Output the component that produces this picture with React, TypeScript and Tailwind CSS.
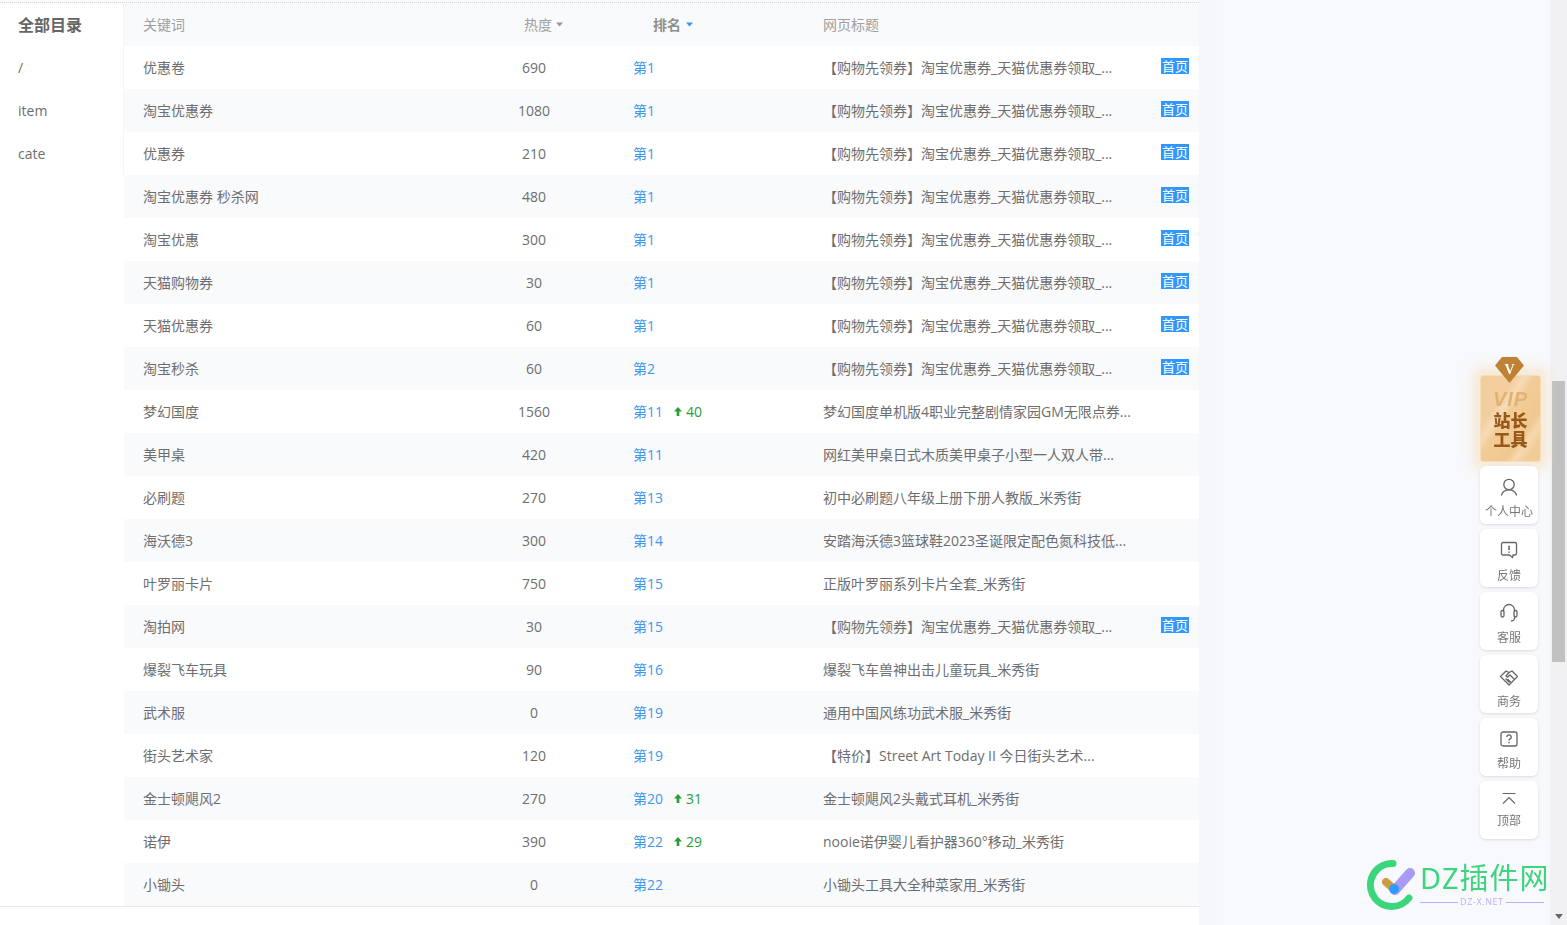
import React from "react";

const T = "【购物先领券】淘宝优惠券_天猫优惠券领取_...";
const rows: [string, string, string, string | null, string, boolean][] = [
  ["优惠卷", "690", "第1", null, T, true],
  ["淘宝优惠券", "1080", "第1", null, T, true],
  ["优惠券", "210", "第1", null, T, true],
  ["淘宝优惠券 秒杀网", "480", "第1", null, T, true],
  ["淘宝优惠", "300", "第1", null, T, true],
  ["天猫购物券", "30", "第1", null, T, true],
  ["天猫优惠券", "60", "第1", null, T, true],
  ["淘宝秒杀", "60", "第2", null, T, true],
  ["梦幻国度", "1560", "第11", "40", "梦幻国度单机版4职业完整剧情家园GM无限点券...", false],
  ["美甲桌", "420", "第11", null, "网红美甲桌日式木质美甲桌子小型一人双人带...", false],
  ["必刷题", "270", "第13", null, "初中必刷题八年级上册下册人教版_米秀街", false],
  ["海沃德3", "300", "第14", null, "安踏海沃德3篮球鞋2023圣诞限定配色氮科技低...", false],
  ["叶罗丽卡片", "750", "第15", null, "正版叶罗丽系列卡片全套_米秀街", false],
  ["淘拍网", "30", "第15", null, T, true],
  ["爆裂飞车玩具", "90", "第16", null, "爆裂飞车兽神出击儿童玩具_米秀街", false],
  ["武术服", "0", "第19", null, "通用中国风练功武术服_米秀街", false],
  ["街头艺术家", "120", "第19", null, "【特价】Street Art Today II 今日街头艺术...", false],
  ["金士顿飓风2", "270", "第20", "31", "金士顿飓风2头戴式耳机_米秀街", false],
  ["诺伊", "390", "第22", "29", "nooie诺伊婴儿看护器360°移动_米秀街", false],
  ["小锄头", "0", "第22", null, "小锄头工具大全种菜家用_米秀街", false],
];

const Caret = ({ cls }: { cls: string }) => (
  <svg width="7" height="5" viewBox="0 0 7 5" className={cls}>
    <path d="M0 0.5h7L3.5 4.5z" fill="currentColor" />
  </svg>
);

const UserIcon = () => (
  <svg width="20" height="20" viewBox="0 0 20 20" fill="none" stroke="#666" strokeWidth="1.3">
    <circle cx="10" cy="7.5" r="5.2" />
    <path d="M2.5 18c1-3.4 3.6-5.200 7.500-5.200s6.500 1.800 7.500 5.200" strokeLinecap="round" />
  </svg>
);
const FeedbackIcon = () => (
  <svg width="18" height="18" viewBox="0 0 18 18" fill="none" stroke="#666" strokeWidth="1.3">
    <path d="M3 1.500h12a1.500 1.500 0 0 1 1.500 1.500v9.500a1.500 1.500 0 0 1-1.500 1.500h-2l-.5 2.500-3-2.500H3a1.500 1.500 0 0 1-1.500-1.500V3A1.500 1.500 0 0 1 3 1.500z" strokeLinejoin="round" />
    <path d="M9 4.800v4.200M9 10.400v1.400" strokeWidth="1.6" />
  </svg>
);
const HeadsetIcon = () => (
  <svg width="20" height="20" viewBox="0 0 20 20" fill="none" stroke="#666" strokeWidth="1.3">
    <path d="M4.500 8V7a5.500 5.500 0 0 1 11 0v1M15.500 13v2.500a3 3 0 0 1-3 2.500" strokeLinecap="round" />
    <rect x="2" y="7.500" width="3" height="6.500" rx="1.400" />
    <rect x="15" y="7.500" width="3" height="6.500" rx="1.400" />
  </svg>
);
const HandIcon = () => (
  <svg width="20" height="20" viewBox="0 0 20 20" fill="none" stroke="#666" strokeWidth="1.3" strokeLinejoin="round">
    <path d="M1.500 9.500 7 4l3 1.500L13 4l5.500 5.500L10 18z" />
    <path d="M10 5.500 7 9l1.500 1.200L11 8l4 4M9 12.500l2.500 2.500M7 12l3 3" strokeLinecap="round" />
  </svg>
);
const HelpIcon = () => (
  <svg width="18" height="18" viewBox="0 0 18 18" fill="none" stroke="#666" strokeWidth="1.3">
    <rect x="1" y="2" width="16" height="14" rx="2" />
    <path d="M6.800 7a2.200 2.200 0 1 1 3.400 1.900c-.8.500-1.200.9-1.200 1.700M9 11.800v1.400" strokeWidth="1.400" />
  </svg>
);
const TopIcon = () => (
  <svg width="16" height="14" viewBox="0 0 16 14" fill="none" stroke="#666" strokeWidth="1.2">
    <path d="M1.500 1.500h13M2 11.500 8 5.500l6 6" />
  </svg>
);

const cards: [React.ReactNode, string, string][] = [
  [<UserIcon />, "个人中心", "pt-[11px] gap-[9px]"],
  [<FeedbackIcon />, "反馈", "pt-[12px] gap-[11px]"],
  [<HeadsetIcon />, "客服", "pt-[11px] gap-[9px]"],
  [<HandIcon />, "商务", "pt-[12px] gap-[9px]"],
  [<HelpIcon />, "帮助", "pt-[12px] gap-[10px]"],
  [<TopIcon />, "顶部", "pt-[11px] gap-[9px]"],
];

export default function App() {
  return (
    <div className="flex h-screen overflow-hidden bg-[#f8f9fc] text-[14px] text-[#6e6e6e] font-['Open_Sans','Noto_Sans_CJK_SC',sans-serif]">
      <main className="w-[1199px] h-full bg-white flex flex-col shrink-0">
        <div className="h-[3px] shrink-0 bg-[#fbfbfc] border-b border-dotted border-[#d4d4d4]" />
        <div className="flex items-start">
          <aside className="w-[124px] shrink-0 border-r border-[#f4f4f4] pl-[18px]">
            <div className="h-[43px] leading-[45px] text-[16px] font-semibold text-[#666]">全部目录</div>
            <div className="h-[43px] leading-[43px]">/</div>
            <div className="h-[43px] leading-[43px]">item</div>
            <div className="h-[43px] leading-[43px]">cate</div>
          </aside>
          <section className="flex-1">
            <div className="grid grid-cols-[350px_120px_210px_1fr] h-[43px] items-center bg-[#f9fafc] text-[14px] text-[#a0a0a0]">
              <div className="pl-[19px]">关键词</div>
              <div className="pl-[50px] flex items-center gap-[4px]">
                热度
                <Caret cls="text-[#999]" />
              </div>
              <div className="pl-[59px] flex items-center gap-[5px] font-semibold text-[#909090]">
                排名
                <Caret cls="text-[#3a96f0]" />
              </div>
              <div className="pl-[19px]">网页标题</div>
            </div>
            {rows.map(([k, h, r, up, t, b], i) => (
              <div
                key={i}
                className={`grid grid-cols-[350px_120px_210px_1fr] h-[43px] items-center ${i % 2 ? "bg-[#f9fafc]" : "bg-white"}`}
              >
                <div className="pl-[19px]">{k}</div>
                <div className="text-center">{h}</div>
                <div className="pl-[39px] flex items-center text-[#4296ee]">
                  {r}
                  {up && (
                    <span className="flex items-center ml-[11px] gap-[4px] text-[#2a9d33]">
                      <svg width="8" height="9" viewBox="0 0 9 10">
                        <path d="M4.500 0 9 5H6v5H3V5H0z" fill="currentColor" />
                      </svg>
                      {up}
                    </span>
                  )}
                </div>
                <div className="pl-[19px] pr-[10px] flex justify-between h-full items-center whitespace-nowrap">
                  <span>{t}</span>
                  {b && (
                    <span className="self-start mt-[12px] w-[28px] h-[16px] text-[13px] leading-[16px] bg-[#2f97ff] text-white text-center">
                      首页
                    </span>
                  )}
                </div>
              </div>
            ))}
          </section>
        </div>
        <div className="border-t border-[#e8e8e8]" />
      </main>
      <div className="w-[18px] shrink-0 bg-[#f6f7fa]" />
      <div className="flex-1" />
      <div className="w-[17px] shrink-0 bg-[#f1f1f3] h-full pl-[2px]">
        <div className="mt-[381px] h-[281px] w-[13px] bg-[#c1c1c1]" />
      </div>

      {/* VIP badge */}
      <div className="fixed left-[1480px] top-[375px] w-[61px] h-[87px] rounded-[3px] bg-[linear-gradient(125deg,#f3cf9f_0%,#f3cf9f_30%,#f7dcb8_38%,#f2cc98_46%,#f0c78f_70%,#f6d8b0_78%,#f2cc98_88%)] border border-[#f7dcb8] shadow-[0_0_10px_8px_rgba(246,222,190,0.55)] flex flex-col items-center overflow-hidden">
        <div className="mt-[13px] h-[20px] text-[20px] leading-[20px] italic font-bold tracking-[1px] text-[#e2b274] font-['Liberation_Sans',sans-serif]">VIP</div>
        <div className="mt-[1px] text-[17px] leading-[19px] font-black text-[#96591a] text-center font-['Noto_Sans_CJK_SC',sans-serif]">
          站长
          <br />
          工具
        </div>
      </div>
      <svg className="fixed left-[1495px] top-[357px]" width="29" height="26" viewBox="0 0 29 26">
        <path d="M7 0h15l7 8.500L14.500 26 0 8.500z" fill="#bd8233" />
        <text x="14.500" y="17" textAnchor="middle" fontSize="14" fontWeight="700" fill="#fff" fontFamily="Liberation Serif, serif">V</text>
      </svg>

      {/* tool cards */}
      <div className="fixed left-[1480px] top-[466px] flex flex-col gap-[5px]">
        {cards.map(([icon, label, cls]) => (
          <div
            key={label}
            className={`w-[58px] h-[58px] bg-white rounded-[6px] shadow-[0_1px_3px_rgba(0,0,0,0.12)] flex flex-col items-center text-[12px] leading-[12px] text-[#777] ${cls}`}
          >
            {icon}
            <span>{label}</span>
          </div>
        ))}
      </div>

      {/* watermark */}
      <div className="fixed left-[1366px] top-[860px] flex items-start gap-[2px]">
        <svg width="52" height="54" viewBox="0 0 52 54" fill="none">
          <path d="M27 3.500A21.500 21.500 0 1 0 43 38" stroke="#3bd67c" strokeWidth="7" strokeLinecap="round" />
          <path d="M20 22l8 7" stroke="#cf9a43" strokeWidth="8" strokeLinecap="round" />
          <path d="M29 30 L44 13" stroke="#a79bf5" strokeWidth="10" strokeLinecap="round" />
          <circle cx="28" cy="29" r="5" fill="#2e9bff" />
        </svg>
        <div className="flex flex-col">
          <div className="text-[29px] leading-[36px] tracking-[1px] text-[#3fd47e] whitespace-nowrap font-['Noto_Sans','Noto_Sans_CJK_SC',sans-serif]">DZ插件网</div>
          <div className="mt-[1px] flex items-center gap-[2px] text-[9px] leading-[10px] tracking-[0.6px] text-[#bcaef5]">
            <span className="h-px w-[38px] bg-[#bcaef5]" />
            <span className="whitespace-nowrap">DZ-X.NET</span>
            <span className="h-px w-[38px] bg-[#bcaef5]" />
          </div>
        </div>
      </div>
      <svg className="fixed left-[1555px] top-[914px]" width="8" height="5" viewBox="0 0 8 5">
        <path d="M0 0h8L4 5z" fill="#666" />
      </svg>
    </div>
  );
}
